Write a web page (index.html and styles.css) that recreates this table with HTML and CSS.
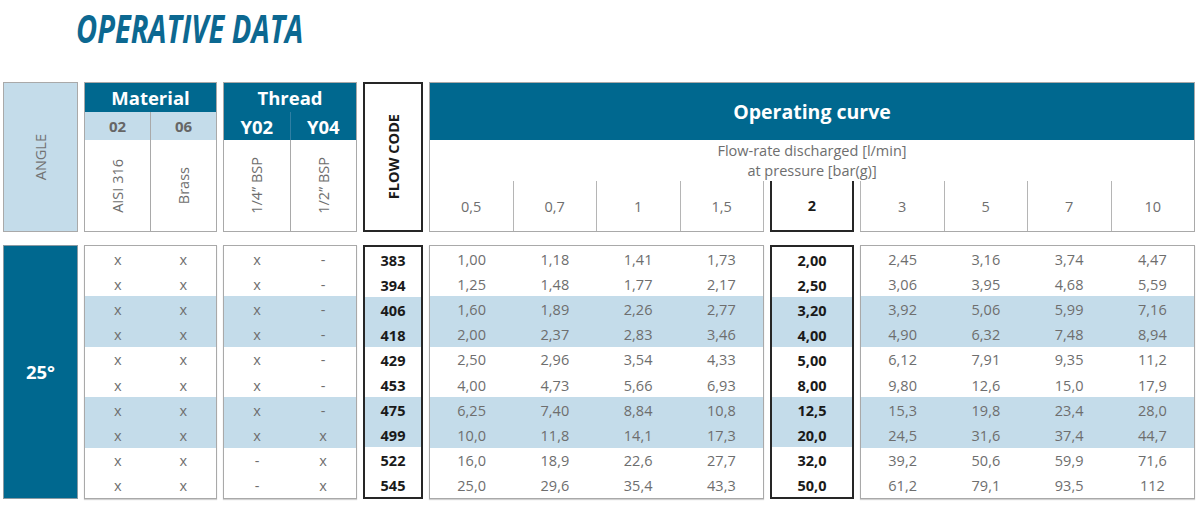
FILE: index.html
```html
<!DOCTYPE html>
<html lang="en">
<head>
<meta charset="utf-8">
<title>Operative data</title>
<link rel="stylesheet" href="styles.css">
</head>
<body>
<div class="page">
  <h1 class="title">OPERATIVE DATA</h1>
  <div class="sheet">
    <!-- header row -->
    <div class="hd angle-hd"><span class="vt">ANGLE</span></div>

    <div class="hd grp">
      <div class="band">Material</div>
      <div class="codes light"><div class="c">02</div><div class="c">06</div></div>
      <div class="names"><div class="c"><span class="vt">AISI 316</span></div><div class="c"><span class="vt">Brass</span></div></div>
    </div>

    <div class="hd grp">
      <div class="band">Thread</div>
      <div class="codes dark"><div class="c">Y02</div><div class="c">Y04</div></div>
      <div class="names"><div class="c"><span class="vt">1/4” BSP</span></div><div class="c"><span class="vt">1/2” BSP</span></div></div>
    </div>

    <div class="hd flow-hd"><span class="vt">FLOW CODE</span></div>

    <div class="op-hd">
      <div class="op-band">Operating curve</div>
      <div class="op-note">Flow-rate discharged [l/min]<br>at pressure [bar(g)]</div>
      <div class="op-cols">
        <div class="pl"><div class="c">0,5</div><div class="c">0,7</div><div class="c">1</div><div class="c">1,5</div></div>
        <div class="pk">2</div>
        <div class="pr"><div class="c">3</div><div class="c">5</div><div class="c">7</div><div class="c">10</div></div>
      </div>
    </div>

    <!-- body row -->
    <div class="angle-bd">25°</div>

    <div class="box">
      <div class="r"><div class="c">x</div><div class="c">x</div></div>
      <div class="r"><div class="c">x</div><div class="c">x</div></div>
      <div class="r"><div class="c">x</div><div class="c">x</div></div>
      <div class="r"><div class="c">x</div><div class="c">x</div></div>
      <div class="r"><div class="c">x</div><div class="c">x</div></div>
      <div class="r"><div class="c">x</div><div class="c">x</div></div>
      <div class="r"><div class="c">x</div><div class="c">x</div></div>
      <div class="r"><div class="c">x</div><div class="c">x</div></div>
      <div class="r"><div class="c">x</div><div class="c">x</div></div>
      <div class="r"><div class="c">x</div><div class="c">x</div></div>
    </div>

    <div class="box">
      <div class="r"><div class="c">x</div><div class="c">-</div></div>
      <div class="r"><div class="c">x</div><div class="c">-</div></div>
      <div class="r"><div class="c">x</div><div class="c">-</div></div>
      <div class="r"><div class="c">x</div><div class="c">-</div></div>
      <div class="r"><div class="c">x</div><div class="c">-</div></div>
      <div class="r"><div class="c">x</div><div class="c">-</div></div>
      <div class="r"><div class="c">x</div><div class="c">-</div></div>
      <div class="r"><div class="c">x</div><div class="c">x</div></div>
      <div class="r"><div class="c">-</div><div class="c">x</div></div>
      <div class="r"><div class="c">-</div><div class="c">x</div></div>
    </div>

    <div class="box bold-box">
      <div class="r"><div class="c">383</div></div>
      <div class="r"><div class="c">394</div></div>
      <div class="r"><div class="c">406</div></div>
      <div class="r"><div class="c">418</div></div>
      <div class="r"><div class="c">429</div></div>
      <div class="r"><div class="c">453</div></div>
      <div class="r"><div class="c">475</div></div>
      <div class="r"><div class="c">499</div></div>
      <div class="r"><div class="c">522</div></div>
      <div class="r"><div class="c">545</div></div>
    </div>

    <div class="op-bd">
      <div class="box wide">
        <div class="r"><div class="c">1,00</div><div class="c">1,18</div><div class="c">1,41</div><div class="c">1,73</div></div>
        <div class="r"><div class="c">1,25</div><div class="c">1,48</div><div class="c">1,77</div><div class="c">2,17</div></div>
        <div class="r"><div class="c">1,60</div><div class="c">1,89</div><div class="c">2,26</div><div class="c">2,77</div></div>
        <div class="r"><div class="c">2,00</div><div class="c">2,37</div><div class="c">2,83</div><div class="c">3,46</div></div>
        <div class="r"><div class="c">2,50</div><div class="c">2,96</div><div class="c">3,54</div><div class="c">4,33</div></div>
        <div class="r"><div class="c">4,00</div><div class="c">4,73</div><div class="c">5,66</div><div class="c">6,93</div></div>
        <div class="r"><div class="c">6,25</div><div class="c">7,40</div><div class="c">8,84</div><div class="c">10,8</div></div>
        <div class="r"><div class="c">10,0</div><div class="c">11,8</div><div class="c">14,1</div><div class="c">17,3</div></div>
        <div class="r"><div class="c">16,0</div><div class="c">18,9</div><div class="c">22,6</div><div class="c">27,7</div></div>
        <div class="r"><div class="c">25,0</div><div class="c">29,6</div><div class="c">35,4</div><div class="c">43,3</div></div>
      </div>
      <div class="box bold-box key">
        <div class="r"><div class="c">2,00</div></div>
        <div class="r"><div class="c">2,50</div></div>
        <div class="r"><div class="c">3,20</div></div>
        <div class="r"><div class="c">4,00</div></div>
        <div class="r"><div class="c">5,00</div></div>
        <div class="r"><div class="c">8,00</div></div>
        <div class="r"><div class="c">12,5</div></div>
        <div class="r"><div class="c">20,0</div></div>
        <div class="r"><div class="c">32,0</div></div>
        <div class="r"><div class="c">50,0</div></div>
      </div>
      <div class="box wide">
        <div class="r"><div class="c">2,45</div><div class="c">3,16</div><div class="c">3,74</div><div class="c">4,47</div></div>
        <div class="r"><div class="c">3,06</div><div class="c">3,95</div><div class="c">4,68</div><div class="c">5,59</div></div>
        <div class="r"><div class="c">3,92</div><div class="c">5,06</div><div class="c">5,99</div><div class="c">7,16</div></div>
        <div class="r"><div class="c">4,90</div><div class="c">6,32</div><div class="c">7,48</div><div class="c">8,94</div></div>
        <div class="r"><div class="c">6,12</div><div class="c">7,91</div><div class="c">9,35</div><div class="c">11,2</div></div>
        <div class="r"><div class="c">9,80</div><div class="c">12,6</div><div class="c">15,0</div><div class="c">17,9</div></div>
        <div class="r"><div class="c">15,3</div><div class="c">19,8</div><div class="c">23,4</div><div class="c">28,0</div></div>
        <div class="r"><div class="c">24,5</div><div class="c">31,6</div><div class="c">37,4</div><div class="c">44,7</div></div>
        <div class="r"><div class="c">39,2</div><div class="c">50,6</div><div class="c">59,9</div><div class="c">71,6</div></div>
        <div class="r"><div class="c">61,2</div><div class="c">79,1</div><div class="c">93,5</div><div class="c">112</div></div>
      </div>
    </div>
  </div>
</div>
</body>
</html>
```

FILE: styles.css
```css
* { box-sizing: border-box; }

html, body {
  margin: 0;
  padding: 0;
  background: #ffffff;
}

body {
  font-family: "Open Sans", "Noto Sans", "Liberation Sans", sans-serif;
  color: #666666;
}

.page {
  width: 1200px;
  height: 506px;
  overflow: hidden;
}

.title {
  margin: 8px 0 0 76px;
  height: 40px;
  font-size: 39px;
  line-height: 40px;
  font-weight: 700;
  font-style: italic;
  color: #0c6891;
  letter-spacing: 0;
  white-space: nowrap;
  transform: scaleX(0.745);
  transform-origin: left center;
}

.sheet {
  margin: 34px 0 0 3px;
  display: grid;
  grid-template-columns: 75px 133px 134px 60px 766px;
  grid-template-rows: 150px 254px;
  column-gap: 6px;
  row-gap: 13px;
}

.vt {
  writing-mode: vertical-rl;
  transform: rotate(180deg);
  white-space: nowrap;
}

/* ---------- header ---------- */
.hd {
  border: 1px solid #a9a9a9;
}

.angle-hd {
  background: #c4dcea;
  display: flex;
  align-items: center;
  justify-content: center;
  font-size: 14.5px;
  color: #737373;
}

.grp {
  display: flex;
  flex-direction: column;
  background: #ffffff;
}

.band {
  height: 29px;
  background: #00688f;
  color: #ffffff;
  font-weight: 700;
  font-size: 18.5px;
  line-height: 29px;
  text-align: center;
}

.codes {
  height: 28px;
  display: flex;
  font-weight: 700;
}

.codes .c {
  flex: 1;
  display: flex;
  align-items: center;
  justify-content: center;
}

.codes.light {
  background: #c4dcea;
  color: #666666;
  font-size: 15px;
}

.codes.light .c + .c {
  border-left: 1px solid #a9a9a9;
}

.codes.dark {
  background: #00688f;
  color: #ffffff;
  font-size: 18.5px;
}

.codes.dark .c + .c {
  border-left: 1px solid #2f7fa3;
}

.names {
  flex: 1;
  display: flex;
  font-size: 14.5px;
  color: #6e6e6e;
}

.names .c {
  flex: 1;
  display: flex;
  align-items: center;
  justify-content: center;
}

.names .c + .c {
  border-left: 1px solid #a9a9a9;
}

.flow-hd {
  border: 2px solid #262626;
  display: flex;
  align-items: center;
  justify-content: center;
  font-weight: 700;
  font-size: 14.5px;
  color: #1a1a1a;
}

.op-hd {
  display: flex;
  flex-direction: column;
}

.op-band {
  height: 58px;
  background: #00688f;
  border: 1px solid #a9a9a9;
  border-bottom: 0;
  color: #ffffff;
  font-weight: 700;
  font-size: 19.5px;
  display: flex;
  align-items: center;
  justify-content: center;
}

.op-note {
  height: 41px;
  border-left: 1px solid #a9a9a9;
  border-right: 1px solid #a9a9a9;
  padding-top: 1px;
  text-align: center;
  font-size: 14.5px;
  line-height: 20px;
  color: #6e6e6e;
}

.op-cols {
  flex: 1;
  display: flex;
  font-size: 14.5px;
  color: #6e6e6e;
}

.op-cols .c {
  flex: 1;
  display: flex;
  align-items: center;
  justify-content: center;
}

.pl, .pr {
  width: 335px;
  display: flex;
  border-bottom: 1px solid #a9a9a9;
}

.pl { border-left: 1px solid #a9a9a9; }
.pl .c { border-right: 1px solid #b5b5b5; }

.pr { border-right: 1px solid #a9a9a9; }
.pr .c { border-left: 1px solid #b5b5b5; }

.pk {
  width: 84px;
  margin: 0 6px;
  border: 2px solid #262626;
  border-top: 0;
  display: flex;
  align-items: center;
  justify-content: center;
  font-weight: 700;
  color: #1a1a1a;
}

/* ---------- body ---------- */
.angle-bd {
  background: #00688f;
  border: 1px solid #8a9aa3;
  color: #ffffff;
  font-weight: 700;
  font-size: 18.5px;
  display: flex;
  align-items: center;
  justify-content: center;
  padding-bottom: 2px;
}

.box {
  border: 1px solid #a9a9a9;
  box-shadow: 0 1px 1px rgba(0, 0, 0, 0.18);
  display: flex;
  flex-direction: column;
  background: #ffffff;
  font-size: 14.5px;
  color: #6e6e6e;
}

.r {
  flex: 1;
  display: flex;
}

.r:nth-child(4n+3),
.r:nth-child(4n+4) {
  background: #c4dcea;
}

.r .c {
  flex: 1;
  display: flex;
  align-items: center;
  justify-content: center;
  padding-top: 1px;
}

.bold-box {
  border: 2px solid #262626;
  box-shadow: none;
  font-weight: 700;
  font-size: 14.5px;
  color: #1a1a1a;
}

.op-bd {
  display: flex;
}

.wide {
  width: 335px;
}

.key {
  width: 84px;
  margin: 0 6px;
}
```
